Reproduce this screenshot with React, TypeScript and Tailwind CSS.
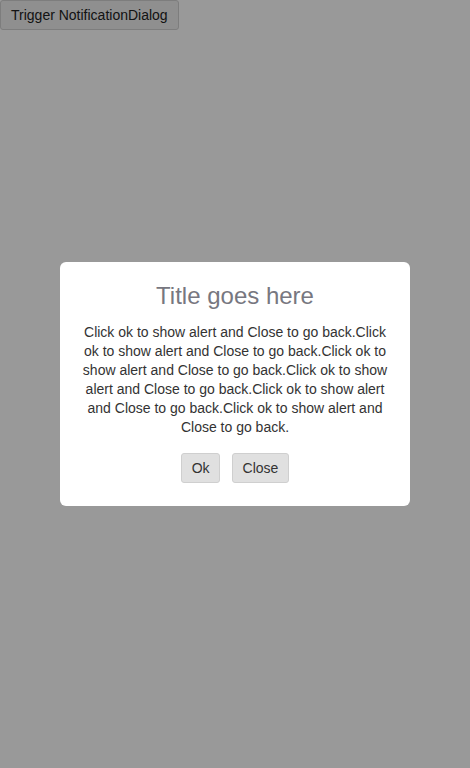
export default function App() {
  const body =
    "Click ok to show alert and Close to go back.Click ok to show alert and Close to go back.Click ok to show alert and Close to go back.Click ok to show alert and Close to go back.Click ok to show alert and Close to go back.Click ok to show alert and Close to go back.";
  return (
    <div className="min-h-[768px] bg-white" style={{ fontFamily: '"Liberation Sans", Arial, sans-serif' }}>
      <button className="h-[30px] px-[10px] bg-[#efefef] border border-[#d0d0d0] rounded-[3px] text-[14px] text-[#222]">
        Trigger NotificationDialog
      </button>
      <div className="fixed inset-0 bg-black/40 flex items-center justify-center">
        <div className="w-[350px] bg-white rounded-[6px] px-[20px] pt-[20px] pb-[23px] flex flex-col items-center">
          <h2 className="text-[24px] leading-[28px] text-[#777780] text-center">Title goes here</h2>
          <p className="mt-[13px] text-[14px] leading-[19px] text-[#333] text-center">{body}</p>
          <div className="mt-[16px] flex gap-[12px]">
            <button className="h-[30px] px-[9.5px] bg-[#e0e0e0] border border-[#cfcfcf] rounded-[3px] text-[14px] text-[#333]">Ok</button>
            <button className="h-[30px] px-[9.5px] bg-[#e0e0e0] border border-[#cfcfcf] rounded-[3px] text-[14px] text-[#333]">Close</button>
          </div>
        </div>
      </div>
    </div>
  );
}
